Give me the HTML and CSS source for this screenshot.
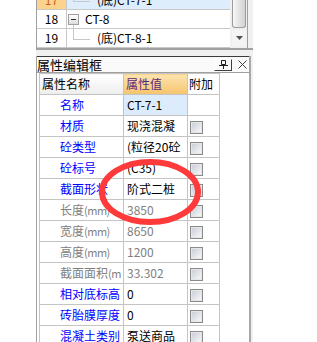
FILE: index.html
```html
<!DOCTYPE html>
<html lang="zh-CN">
<head>
    <meta charset="UTF-8">
    <meta name="viewport" content="width=device-width, initial-scale=1.0">
    <title>属性编辑框</title>
    <link rel="stylesheet" href="styles.css">
</head>
<body>
    <div class="panel">
        <div class="tree">
            <div class="tree-rows">
                <div class="tree-row current">
                    <div class="num">17</div>
                    <div class="node child"><span class="elbow"></span>(底)CT-7-1</div>
                </div>
                <div class="tree-row">
                    <div class="num">18</div>
                    <div class="node"><span class="toggle"></span>CT-8</div>
                </div>
                <div class="tree-row">
                    <div class="num">19</div>
                    <div class="node child"><span class="elbow"></span>(底)CT-8-1</div>
                </div>
            </div>
            <div class="scrollbar">
                <div class="thumb"></div>
                <div class="arrow">
                    <svg width="7" height="4" viewBox="0 0 7 4"><path d="M0 0h7L3.5 4z" fill="#505050"/></svg>
                </div>
            </div>
        </div>

        <div class="editor">
            <div class="title-bar">
                <span class="title">属性编辑框</span>
                <span class="pin">
                    <svg width="9" height="9" viewBox="0 0 9 9"><path d="M2.5 0.5h4v4h-4zM0 5.5h9M4.5 5.5v3.5" fill="none" stroke="#202020"/></svg>
                </span>
                <span class="close">
                    <svg width="9" height="9" viewBox="0 0 9 9"><path d="M0.5 0.5l8 8M8.5 0.5l-8 8" stroke="#404040"/></svg>
                </span>
            </div>
            <div class="grid-wrap">
                <table class="props">
                    <colgroup>
                        <col class="c-name">
                        <col class="c-value">
                        <col class="c-extra">
                    </colgroup>
                    <tr>
                        <th class="h-name">属性名称</th>
                        <th class="h-value">属性值</th>
                        <th class="h-extra">附加</th>
                    </tr>
                    <tr>
                        <td class="name">名称</td>
                        <td class="value selected">CT-7-1</td>
                        <td></td>
                    </tr>
                    <tr>
                        <td class="name">材质</td>
                        <td class="value">现浇混凝</td>
                        <td><span class="check"></span></td>
                    </tr>
                    <tr>
                        <td class="name">砼类型</td>
                        <td class="value">(粒径20砼</td>
                        <td><span class="check"></span></td>
                    </tr>
                    <tr>
                        <td class="name">砼标号</td>
                        <td class="value">(C35)</td>
                        <td><span class="check"></span></td>
                    </tr>
                    <tr>
                        <td class="name">截面形状</td>
                        <td class="value">阶式二桩</td>
                        <td><span class="check"></span></td>
                    </tr>
                    <tr class="muted">
                        <td class="name">长度<span class="unit">(mm)</span></td>
                        <td class="value">3850</td>
                        <td><span class="check"></span></td>
                    </tr>
                    <tr class="muted">
                        <td class="name">宽度<span class="unit">(mm)</span></td>
                        <td class="value">8650</td>
                        <td><span class="check"></span></td>
                    </tr>
                    <tr class="muted">
                        <td class="name">高度<span class="unit">(mm)</span></td>
                        <td class="value">1200</td>
                        <td><span class="check"></span></td>
                    </tr>
                    <tr class="muted">
                        <td class="name">截面面积<span class="unit">(m</span></td>
                        <td class="value">33.302</td>
                        <td><span class="check"></span></td>
                    </tr>
                    <tr>
                        <td class="name">相对底标高</td>
                        <td class="value">0</td>
                        <td><span class="check"></span></td>
                    </tr>
                    <tr>
                        <td class="name">砖胎膜厚度</td>
                        <td class="value">0</td>
                        <td><span class="check"></span></td>
                    </tr>
                    <tr>
                        <td class="name">混凝土类别</td>
                        <td class="value">泵送商品</td>
                        <td><span class="check"></span></td>
                    </tr>
                </table>
            </div>
        </div>
    </div>

    <!-- hand-drawn highlight over the grid -->
    <svg class="mark" width="108" height="72" viewBox="0 0 108 72">
        <ellipse cx="53" cy="35" rx="48" ry="30" fill="none" stroke="#ff3a3a" stroke-width="6"/>
    </svg>
</body>
</html>
```

FILE: styles.css
```css
body {
    margin: 0;
    width: 317px;
    height: 342px;
    overflow: hidden;
    position: relative;
    background: #fff;
    color: #000;
    font-family: "Noto Sans CJK SC", sans-serif;
    font-size: 12px;
}
.panel {
    margin-left: 36px;
    width: 217px;
    height: 342px;
    background: #f0f0f0;
}

/* top tree grid */
.tree {
    display: flex;
    height: 48px;
    border-bottom: 2px solid #a0a0a0;
    margin-bottom: 6px;
}
.tree-rows {
    width: 193px;
    border-left: 1px solid #a0a0a0;
    background: #fff;
    overflow: hidden;
}
.tree-row {
    display: flex;
    height: 18px;
    border-bottom: 1px solid #c8c8c8;
}
.tree-row:first-child {
    margin-top: -9px;
}
.num {
    width: 29px;
    border-right: 1px solid #c8c8c8;
    text-align: center;
    line-height: 18px;
}
.node {
    flex: 1;
    display: flex;
    align-items: center;
    padding-left: 1px;
    line-height: 18px;
    white-space: nowrap;
}
.current .num {
    background: #fbd38c;
    color: #c4661c;
}
.current .node {
    background: #deedfc;
}
.toggle {
    position: relative;
    width: 9px;
    height: 9px;
    margin-right: 6px;
    border: 1px solid #a0a0a0;
    background: linear-gradient(#fff, #dcdcdc);
}
.toggle::before {
    content: "";
    position: absolute;
    left: 2px;
    top: 4px;
    width: 5px;
    height: 1px;
    background: #303030;
}
.toggle::after {
    content: "";
    position: absolute;
    left: 4px;
    top: 10px;
    width: 1px;
    height: 4px;
    background: #c8c8c8;
}
.elbow {
    align-self: flex-start;
    width: 16px;
    height: 10px;
    margin-left: 5px;
    margin-right: 7px;
    border-left: 1px solid #c8c8c8;
    border-bottom: 1px solid #c8c8c8;
}
.scrollbar {
    width: 17px;
    border-right: 1px solid #a0a0a0;
    background: #f0f0f0;
    display: flex;
    flex-direction: column;
}
.thumb {
    height: 27px;
    margin: 0 1px 2px 2px;
    border: 1px solid #9c9c9c;
    border-top: none;
    border-radius: 0 0 3px 3px;
    background: linear-gradient(to right, #f6f6f6, #d2d2d2);
}
.arrow {
    height: 16px;
    margin: 0 1px 0 2px;
    display: flex;
    align-items: center;
    justify-content: center;
    background: #f4f4f4;
}

/* property editor */
.editor {
    width: 212px;
    border-left: 1px solid #a0a0a0;
    border-right: 2px solid #a8a8a8;
}
.title-bar {
    display: flex;
    align-items: center;
    height: 15px;
    border-top: 1px solid #3a3a3a;
    background: #fafafa;
}
.title {
    font-size: 13px;
    line-height: 15px;
}
.pin {
    margin-left: auto;
    width: 16px;
    height: 10px;
    border: 1px solid;
    border-color: #fff #404040 #404040 #fff;
    display: flex;
    align-items: center;
    justify-content: center;
}
.close {
    width: 9px;
    height: 9px;
    margin-left: 6px;
    margin-right: 2px;
    display: flex;
}
.grid-wrap {
    height: 280px;
    overflow: hidden;
    border-top: 1px solid #a0a0a0;
    padding-left: 2px;
    background: #fff;
}
.props {
    border-collapse: collapse;
    table-layout: fixed;
    width: 180px;
}
.c-name { width: 84px; }
.c-value { width: 64px; }
.c-extra { width: 32px; }
.props th, .props td {
    height: 20px;
    padding: 0;
    border: 1px solid #c4c4c4;
    line-height: 20px;
    text-align: left;
    font-weight: normal;
    white-space: nowrap;
    overflow: hidden;
}
.h-name {
    padding-left: 2px !important;
    background: linear-gradient(#ffffff, #ededed);
}
.h-value {
    padding-left: 2px !important;
    background: linear-gradient(#fde4b0, #f5c46c);
    color: #5a2a80;
}
.h-extra {
    padding-left: 1px !important;
}
.props .name {
    padding-left: 20px;
    color: #0000ff;
}
.props .value {
    padding-left: 3px;
}
.props .selected {
    background: #ddecfc;
}
.muted .name, .muted .value {
    color: #808080;
}
.unit {
    font-size: 11px;
    letter-spacing: -0.5px;
}
.check {
    display: inline-block;
    width: 11px;
    height: 11px;
    margin-left: 2px;
    vertical-align: middle;
    border: 1px solid #8a8a8a;
    box-shadow: inset 0 0 0 1px #e6e6e6;
    background: linear-gradient(135deg, #c6cbd3, #fbfbfb);
}
.mark {
    position: absolute;
    left: 97px;
    top: 157px;
    pointer-events: none;
}
```
